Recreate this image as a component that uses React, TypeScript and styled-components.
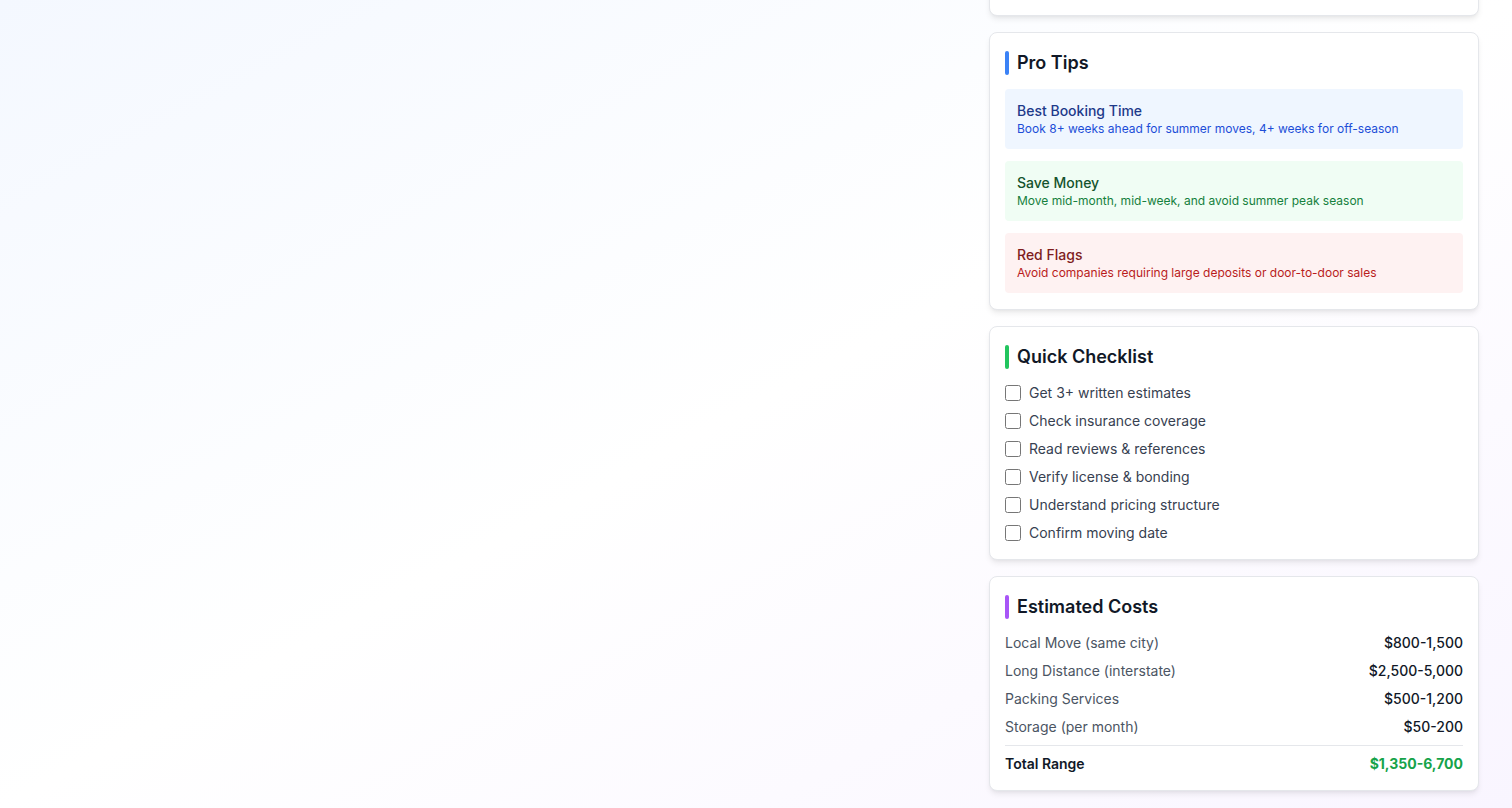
import React from "react";
import styled, { createGlobalStyle } from "styled-components";

const GlobalStyle = createGlobalStyle`
  html, body { margin: 0; padding: 0; }
  body {
    font-family: Inter, "Noto Sans", "Liberation Sans", sans-serif;
    -webkit-font-smoothing: antialiased;
  }
  * { box-sizing: border-box; }
`;

const Page = styled.div`
  width: 100%;
  height: 808px;
  overflow: hidden;
  background: linear-gradient(to bottom right, #f4f8ff 0%, #ffffff 50%, #f9f5ff 100%);
  display: flex;
  justify-content: flex-end;
  padding-right: 33px;
`;

const Sidebar = styled.aside`
  width: 490px;
  display: flex;
  flex-direction: column;
  gap: 16px;
  margin-top: -84px;
`;

const Card = styled.section<{ $height?: number }>`
  background: #ffffff;
  border: 1px solid #e5e7eb;
  border-radius: 8px;
  box-shadow: 0 4px 6px -1px rgba(0, 0, 0, 0.08), 0 2px 4px -2px rgba(0, 0, 0, 0.06);
  padding: 16px 15px;
  ${(p) => (p.$height ? `height: ${p.$height}px;` : "")}
`;

const TitleRow = styled.div`
  display: flex;
  align-items: center;
  gap: 8px;
  height: 28px;
  margin-bottom: 12px;
`;

const Accent = styled.span<{ $color: string }>`
  width: 4px;
  height: 24px;
  border-radius: 2px;
  background: ${(p) => p.$color};
`;

const Title = styled.h3`
  margin: 0;
  font-size: 18px;
  line-height: 28px;
  font-weight: 600;
  color: #111827;
`;

const TipList = styled.div`
  display: flex;
  flex-direction: column;
  gap: 12px;
`;

const tipColors = {
  blue: { bg: "#eff6ff", title: "#1e3a8a", text: "#1d4ed8" },
  green: { bg: "#f0fdf4", title: "#14532d", text: "#15803d" },
  red: { bg: "#fef2f2", title: "#7f1d1d", text: "#b91c1c" },
};

type Tone = keyof typeof tipColors;

const Tip = styled.div<{ $tone: Tone }>`
  background: ${(p) => tipColors[p.$tone].bg};
  border-radius: 4px;
  padding: 12px;
`;

const TipTitle = styled.div<{ $tone: Tone }>`
  font-size: 14px;
  line-height: 20px;
  font-weight: 500;
  color: ${(p) => tipColors[p.$tone].title};
`;

const TipText = styled.div<{ $tone: Tone }>`
  font-size: 12px;
  line-height: 16px;
  color: ${(p) => tipColors[p.$tone].text};
`;

const CheckList = styled.ul`
  list-style: none;
  margin: 0;
  padding: 0;
  display: flex;
  flex-direction: column;
  gap: 8px;
`;

const CheckItem = styled.li`
  display: flex;
  align-items: center;
  gap: 8px;
  font-size: 14px;
  line-height: 20px;
  color: #374151;
`;

const Box = styled.input`
  width: 16px;
  height: 16px;
  margin: 0;
  flex-shrink: 0;
`;

const CostList = styled.div`
  display: flex;
  flex-direction: column;
  gap: 8px;
`;

const CostRow = styled.div<{ $total?: boolean }>`
  display: flex;
  justify-content: space-between;
  font-size: 14px;
  line-height: 20px;
  ${(p) =>
    p.$total
      ? `border-top: 1px solid #e5e7eb; padding-top: 8px;`
      : ""}
`;

const CostLabel = styled.span<{ $total?: boolean }>`
  color: ${(p) => (p.$total ? "#111827" : "#4b5563")};
  font-weight: ${(p) => (p.$total ? 600 : 400)};
`;

const CostValue = styled.span<{ $total?: boolean }>`
  color: ${(p) => (p.$total ? "#16a34a" : "#111827")};
  font-weight: ${(p) => (p.$total ? 700 : 500)};
`;

const tips: { tone: Tone; title: string; text: string }[] = [
  { tone: "blue", title: "Best Booking Time", text: "Book 8+ weeks ahead for summer moves, 4+ weeks for off-season" },
  { tone: "green", title: "Save Money", text: "Move mid-month, mid-week, and avoid summer peak season" },
  { tone: "red", title: "Red Flags", text: "Avoid companies requiring large deposits or door-to-door sales" },
];

const checklist = [
  "Get 3+ written estimates",
  "Check insurance coverage",
  "Read reviews & references",
  "Verify license & bonding",
  "Understand pricing structure",
  "Confirm moving date",
];

const costs = [
  ["Local Move (same city)", "$800-1,500"],
  ["Long Distance (interstate)", "$2,500-5,000"],
  ["Packing Services", "$500-1,200"],
  ["Storage (per month)", "$50-200"],
];

export default function App() {
  return (
    <>
      <GlobalStyle />
      <Page>
        <Sidebar>
          <Card $height={100} />
          <Card>
            <TitleRow>
              <Accent $color="#3b82f6" />
              <Title>Pro Tips</Title>
            </TitleRow>
            <TipList>
              {tips.map((t) => (
                <Tip key={t.title} $tone={t.tone}>
                  <TipTitle $tone={t.tone}>{t.title}</TipTitle>
                  <TipText $tone={t.tone}>{t.text}</TipText>
                </Tip>
              ))}
            </TipList>
          </Card>
          <Card>
            <TitleRow>
              <Accent $color="#22c55e" />
              <Title>Quick Checklist</Title>
            </TitleRow>
            <CheckList>
              {checklist.map((c) => (
                <CheckItem key={c}>
                  <Box type="checkbox" />
                  <span>{c}</span>
                </CheckItem>
              ))}
            </CheckList>
          </Card>
          <Card>
            <TitleRow>
              <Accent $color="#a855f7" />
              <Title>Estimated Costs</Title>
            </TitleRow>
            <CostList>
              {costs.map(([l, v]) => (
                <CostRow key={l}>
                  <CostLabel>{l}</CostLabel>
                  <CostValue>{v}</CostValue>
                </CostRow>
              ))}
              <CostRow $total>
                <CostLabel $total>Total Range</CostLabel>
                <CostValue $total>$1,350-6,700</CostValue>
              </CostRow>
            </CostList>
          </Card>
        </Sidebar>
      </Page>
    </>
  );
}
